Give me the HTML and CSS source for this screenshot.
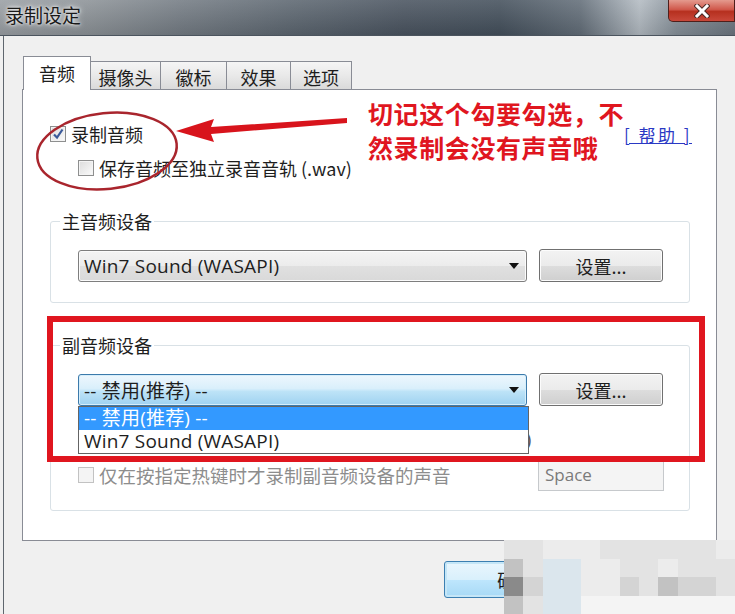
FILE: index.html
```html
<!DOCTYPE html>
<html lang="zh-CN">
<head>
    <meta charset="UTF-8">
    <title>录制设定</title>
    <link rel="stylesheet" href="styles.css">
</head>
<body>
    <div class="window">
        <!-- 标题栏 -->
        <div class="titlebar">
            <span class="title">录制设定</span>
            <div class="close">
                <svg width="16" height="14" viewBox="0 0 16 14">
                    <path d="M3 2 L13 12 M13 2 L3 12" stroke="#4a2a26" stroke-width="5" stroke-linecap="square"/>
                    <path d="M3 2 L13 12 M13 2 L3 12" stroke="#fff" stroke-width="3" stroke-linecap="square"/>
                </svg>
            </div>
        </div>

        <div class="client">
            <!-- 标签页 -->
            <div class="tabs">
                <div class="tab active">音频</div>
                <div class="tab w2">摄像头</div>
                <div class="tab w3">徽标</div>
                <div class="tab w4">效果</div>
                <div class="tab w5">选项</div>
            </div>

            <div class="panel">
                <div class="row first">
                    <label class="check"><span class="box checked">
                        <svg width="12" height="12" viewBox="0 0 12 12"><path d="M2 6.5 L5 9.5 L10.5 1.5" fill="none" stroke="#3b5a9a" stroke-width="2.2"/></svg>
                    </span>录制音频</label>
                    <a class="help" href="#">[ 帮助 ]</a>
                </div>
                <div class="row sub">
                    <label class="check"><span class="box"></span>保存音频至独立录音音轨 (.wav)</label>
                </div>

                <!-- 主音频设备 -->
                <fieldset class="group main">
                    <legend>主音频设备</legend>
                    <div class="group-body">
                        <div class="device">
                            <div class="combo"><span>Win7 Sound (WASAPI)</span><i class="arrow"></i></div>
                            <div class="btn">设置...</div>
                        </div>
                    </div>
                </fieldset>

                <!-- 副音频设备 -->
                <fieldset class="group second">
                    <legend>副音频设备</legend>
                    <div class="group-body">
                        <div class="device">
                            <div class="combo focus">
                                <span>-- 禁用(推荐) --</span><i class="arrow"></i>
                                <ul class="dropdown">
                                    <li class="selected">-- 禁用(推荐) --</li>
                                    <li>Win7 Sound (WASAPI)</li>
                                </ul>
                            </div>
                            <div class="btn">设置...</div>
                        </div>
                        <div class="row ghost"><span>t)</span></div>
                        <div class="row hotkey">
                            <label class="check disabled"><span class="box"></span>仅在按指定热键时才录制副音频设备的声音</label>
                            <div class="keybox">Space</div>
                        </div>
                    </div>
                </fieldset>
            </div>

            <div class="footer">
                <div class="btn default">确定</div>
            </div>
        </div>

        <!-- 标注 -->
        <svg class="marks" width="735" height="614" viewBox="0 0 735 614">
            <ellipse cx="107" cy="151" rx="70" ry="38" transform="rotate(-6 107 151)" fill="none" stroke="#a9252d" stroke-width="2.5"/>
            <polygon points="176,131 214,119 211,127 347,118 347,123 211,134 214,142" fill="#d8141c"/>
        </svg>
        <div class="note">切记这个勾要勾选，不<br>然录制会没有声音哦</div>
        <div class="redbox"></div>

        <!-- 马赛克 -->
        <div class="mosaic">
            <i class="c1"></i><i class="c1"></i><i class="c0"></i><i class="c0"></i><i class="c0"></i><i class="c1"></i><i class="c1"></i><i class="c1"></i><i class="c1"></i><i class="c1"></i><i class="c1"></i><i class="c0"></i>
            <i class="c3"></i><i class="c1"></i><i class="c5"></i><i class="c5"></i><i class="c0"></i><i class="c0"></i><i class="c1"></i><i class="c1"></i><i class="c0"></i><i class="c1"></i><i class="c1"></i><i class="c1"></i>
            <i class="c4"></i><i class="c2"></i><i class="c5"></i><i class="c5"></i><i class="c0"></i><i class="c0"></i><i class="c2"></i><i class="c1"></i><i class="c3"></i><i class="c2"></i><i class="c2"></i><i class="c1"></i>
            <i class="c3"></i><i class="c1"></i><i class="c5"></i><i class="c5"></i><i class="c6"></i><i class="c6"></i><i class="c6"></i><i class="c6"></i><i class="c6"></i><i class="c6"></i><i class="c6"></i><i class="c6"></i>
        </div>
    </div>
</body>
</html>
```

FILE: styles.css
```css
/* 基础 */
* {
    margin: 0;
    padding: 0;
    box-sizing: border-box;
}

body {
    font-family: "Noto Sans CJK SC", sans-serif;
    font-size: 18px;
    color: #1e1e1e;
    background: #f0f0f0;
}

.window {
    position: relative;
    width: 735px;
    height: 614px;
    overflow: hidden;
    background: #f0f0f0;
}

/* 标题栏 */
.titlebar {
    height: 36px;
    display: flex;
    justify-content: space-between;
    align-items: flex-start;
    border-bottom: 1px solid #4b545e;
    background:
        linear-gradient(180deg, rgba(255,255,255,0.12), rgba(0,0,0,0.1)),
        linear-gradient(90deg, #9a9fa4 0%, #8c9297 12%, #737b83 25%, #5c6670 40%, #4a5460 55%, #44505c 68%, #636e79 79%, #b3bbc2 87%, #87919a 92%, #6c7680 100%);
}

.title {
    padding: 1px 0 0 5px;
    font-size: 19px;
    line-height: 28px;
    color: #1a1a1a;
    text-shadow: 0 0 6px #fff, 0 0 3px #fff;
}

.close {
    width: 67px;
    height: 22px;
    display: flex;
    align-items: center;
    justify-content: center;
    border: 1px solid #4e1f1b;
    border-top: none;
    border-radius: 0 0 0 5px;
    background: linear-gradient(180deg, #e49a8e 0%, #d0584b 45%, #b6301f 55%, #c8483a 100%);
}

.client {
    margin-left: 3px;
    height: 578px;
    padding: 20px 18px 0;
    border-left: 1px solid #5f666e;
}

/* 标签页 */
.tabs {
    display: flex;
    align-items: flex-end;
    height: 33px;
    margin-left: 1px;
}

.tab {
    width: 68px;
    height: 28px;
    margin-left: -1px;
    padding-top: 2px;
    text-align: center;
    line-height: 26px;
    border: 1px solid #898c95;
    border-bottom: none;
    background: linear-gradient(180deg, #f5f5f5 0%, #e9e9e9 50%, #dadada 100%);
}

.tab.active {
    height: 34px;
    margin-left: 0;
    margin-bottom: -1px;
    padding-top: 3px;
    position: relative;
    z-index: 1;
    background: #fff;
}

.tab.w2 { width: 71px; }
.tab.w3 { width: 67px; }
.tab.w4 { width: 65px; }
.tab.w5 { width: 62px; }

.panel {
    width: 695px;
    height: 452px;
    padding-top: 32px;
    border: 1px solid #898c95;
    background: #fff;
}

/* 复选框 */
.row {
    display: flex;
    align-items: center;
    height: 24px;
}

.row.first {
    justify-content: space-between;
    padding: 0 24px 0 27px;
}

.row.sub {
    margin-top: 10px;
    padding-left: 55px;
}

.check {
    display: flex;
    align-items: center;
    gap: 5px;
    line-height: 24px;
}

.box {
    width: 16px;
    height: 16px;
    display: flex;
    align-items: center;
    justify-content: center;
    border: 1px solid #8e8f8f;
    background: linear-gradient(135deg, #dcdcdc, #fbfbfb);
    box-shadow: inset 0 0 0 1px #f4f4f4;
}

.check.disabled {
    color: #8d8d8d;
    font-size: 18.5px;
}

.check.disabled .box {
    border-color: #c2c2c2;
    background: #f4f4f4;
}

.help {
    font-size: 17px;
    letter-spacing: 2.5px;
    color: #2a39c4;
    text-decoration: underline;
}

/* 设备分组 */
.group {
    margin: 30px 26px 0 27px;
    border: 1px solid #d9e1e6;
    border-radius: 3px;
}

.group.second {
    margin-top: 31px;
}

.group legend {
    margin-left: 9px;
    padding: 0 2px;
    line-height: 22px;
}

.group-body {
    padding: 18px 26px 20px 27px;
}

.group.second .group-body {
    padding-bottom: 19px;
}

.device {
    display: flex;
    gap: 12px;
}

.combo {
    position: relative;
    width: 449px;
    height: 32px;
    display: flex;
    align-items: center;
    justify-content: space-between;
    padding: 0 7px 0 5px;
    font-family: "Open Sans", "Noto Sans CJK SC", sans-serif;
    font-size: 19px;
    letter-spacing: 0.2px;
    border: 1px solid #7e7e7e;
    border-radius: 3px;
    background: linear-gradient(180deg, #f4f4f4 0%, #ececec 50%, #e0e0e0 51%, #d9d9d9 100%);
    box-shadow: inset 0 0 0 1px #fbfbfb;
}

.combo.focus {
    border-color: #3c7aab;
    background: linear-gradient(180deg, #eef7fd 0%, #d9effb 45%, #bde3f7 55%, #9fd2f1 100%);
    box-shadow: inset 0 0 0 1px #d6eefb;
}

.arrow {
    width: 0;
    height: 0;
    border-left: 5px solid transparent;
    border-right: 5px solid transparent;
    border-top: 6px solid #111;
}

.dropdown {
    position: absolute;
    top: 31px;
    left: -1px;
    width: 451px;
    list-style: none;
    background: #fff;
    border: 1px solid #646464;
    z-index: 2;
}

.dropdown li {
    height: 23px;
    line-height: 23px;
    padding-left: 5px;
}

.dropdown li.selected {
    background: #3399ff;
    color: #fff;
}

.btn {
    width: 124px;
    height: 33px;
    margin-top: -1px;
    display: flex;
    align-items: center;
    justify-content: center;
    border: 1px solid #707070;
    border-radius: 3px;
    background: linear-gradient(180deg, #f3f3f3 0%, #ebebeb 50%, #dddddd 51%, #cfcfcf 100%);
    box-shadow: inset 0 0 0 1px #fcfcfc;
}

.row.ghost {
    margin-top: 21px;
    padding-left: 441px;
    color: #555;
    font-family: "Open Sans", sans-serif;
    font-size: 19px;
}

.row.hotkey {
    height: 32px;
    margin-top: 8px;
    justify-content: space-between;
    margin-right: -1px;
}

.keybox {
    width: 126px;
    height: 32px;
    padding-left: 6px;
    line-height: 30px;
    font-family: "Open Sans", sans-serif;
    font-size: 17px;
    color: #7a7a7a;
    border: 1px solid #c6c9cc;
    background: #f4f4f4;
}

/* 底部按钮 */
.footer {
    display: flex;
    margin-top: 20px;
}

.btn.default {
    width: 146px;
    height: 37px;
    margin: 0 0 0 422px;
    padding-left: 20px;
    justify-content: flex-start;
    font-size: 19px;
    border-color: #3c7fb1;
    background: linear-gradient(180deg, #eaf6fd 0%, #d9f0fc 50%, #bee6fd 51%, #a7d9f5 100%);
    box-shadow: inset 0 0 0 2px #c5e6f7;
}

.btn.default {
    padding-left: 52px;
}

/* 标注 */
.marks {
    position: absolute;
    left: 0;
    top: 0;
    pointer-events: none;
}

.note {
    position: absolute;
    left: 368px;
    top: 96px;
    font-size: 25px;
    font-weight: bold;
    line-height: 34px;
    letter-spacing: 0.6px;
    color: #e0161f;
}

.redbox {
    position: absolute;
    left: 47px;
    top: 316px;
    width: 658px;
    height: 146px;
    border: 6px solid #e0161f;
}

/* 马赛克 */
.mosaic {
    position: absolute;
    left: 504px;
    top: 540px;
    display: grid;
    grid-template-columns: repeat(12, 19.3px);
    grid-template-rows: repeat(4, 18.5px);
}

.mosaic .c0 { background: #ececec; }
.mosaic .c1 { background: #e3e3e3; }
.mosaic .c2 { background: #d4d4d4; }
.mosaic .c3 { background: #c2c2c2; }
.mosaic .c4 { background: #8a8a8a; }
.mosaic .c5 { background: #dbe6ed; }
.mosaic .c6 { background: #f4f4f4; }
```
